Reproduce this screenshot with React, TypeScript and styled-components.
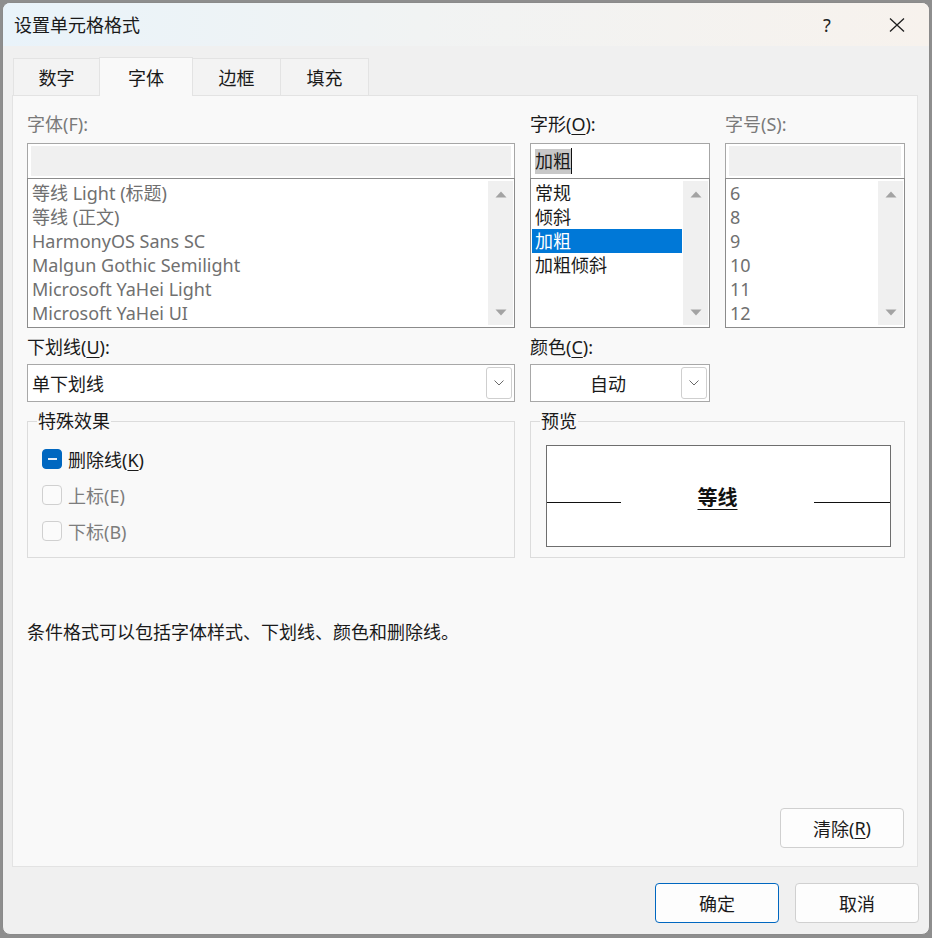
import React from "react";
import styled, { createGlobalStyle } from "styled-components";

const GlobalStyle = createGlobalStyle`
  html, body {
    margin: 0;
    padding: 0;
    background: #8e8e8e;
  }
  body {
    font-family: "Noto Sans", "Noto Sans CJK SC", sans-serif;
    font-size: 18px;
    color: #1a1a1a;
  }
  * {
    box-sizing: border-box;
  }
`;

// Window frame
const Window = styled.div`
  margin: 2px 0 0 2px;
  width: 928px;
  height: 933px;
  border: 1px solid #8a8a8a;
  border-radius: 8px;
  overflow: hidden;
  background: #f0f0f0;
  display: flex;
  flex-direction: column;
`;

const TitleBar = styled.div`
  height: 43px;
  flex: none;
  display: flex;
  align-items: center;
  padding-left: 11px;
  background: linear-gradient(90deg, #e9f3fa 0%, #f1f3f3 45%, #f7f2ed 100%);
`;

const Title = styled.div`
  flex: 1;
  font-size: 18px;
  line-height: 24px;
  color: #1a1a1a;
`;

const TitleButton = styled.div<{ $w: number }>`
  width: ${({ $w }) => $w}px;
  height: 43px;
  display: flex;
  align-items: center;
  justify-content: center;
  font-size: 18px;
  color: #222;
`;

const Body = styled.div`
  flex: 1;
  display: flex;
  flex-direction: column;
  padding: 11px 11px 0 9px;
  min-height: 0;
`;

const TabRow = styled.div`
  display: flex;
  align-items: flex-end;
  height: 38px;
  padding-left: 2px;
`;

const Tab = styled.div<{ $w: number; $active?: boolean }>`
  width: ${({ $w }) => $w}px;
  height: ${({ $active }) => ($active ? 39 : 37)}px;
  margin-bottom: ${({ $active }) => ($active ? -1 : 0)}px;
  position: relative;
  z-index: ${({ $active }) => ($active ? 1 : 0)};
  display: flex;
  align-items: center;
  justify-content: center;
  font-size: 18px;
  color: #1a1a1a;
  background: ${({ $active }) => ($active ? "#f9f9f9" : "#f3f3f3")};
  border: 1px solid #e3e3e3;
  border-bottom: 0;
  margin-left: -1px;
`;

const Panel = styled.div`
  flex: 1;
  display: flex;
  flex-direction: column;
  background: #f9f9f9;
  border: 1px solid #e3e3e3;
  padding: 15px 12px 18px 14px;
`;

const Grid = styled.div`
  display: grid;
  grid-template-columns: 488px 180px 180px;
  column-gap: 15px;
`;

const Field = styled.div<{ $top?: number }>`
  display: flex;
  flex-direction: column;
  margin-top: ${({ $top }) => $top || 0}px;
`;

const Label = styled.div<{ $disabled?: boolean; $gap?: number }>`
  height: 26px;
  line-height: 26px;
  margin-bottom: ${({ $gap }) => $gap ?? 6}px;
  color: ${({ $disabled }) => ($disabled ? "#7a7a7a" : "#1a1a1a")};
`;

const Acc = styled.span`
  text-decoration: underline;
  text-underline-offset: 3px;
  text-decoration-thickness: 1px;
`;

// Text box above each list
const TextBox = styled.div<{ $disabled?: boolean }>`
  height: 36px;
  border: 1px solid #a6a6a6;
  background: #fff;
  padding: ${({ $disabled }) => ($disabled ? "2px 3px" : "4px 4px")};
  display: flex;
  align-items: center;
`;

const DisabledFill = styled.div`
  flex: 1;
  align-self: stretch;
  background: #f0f0f0;
`;

const SelectedText = styled.span`
  background: #c8c8c8;
  line-height: 25px;
  color: #1a1a1a;
`;

const Caret = styled.span`
  display: inline-block;
  width: 1px;
  height: 26px;
  background: #111;
`;

const List = styled.div`
  height: 150px;
  margin-top: -1px;
  border: 1px solid #8b8b8b;
  background: #fff;
  display: flex;
`;

const Items = styled.div`
  flex: 1;
  padding: 2px 1px 0 1px;
  overflow: hidden;
`;

const Item = styled.div<{ $selected?: boolean; $disabled?: boolean }>`
  height: 24px;
  line-height: 24px;
  padding-left: 3px;
  white-space: nowrap;
  color: ${({ $selected, $disabled }) =>
    $selected ? "#fff" : $disabled ? "#707070" : "#1a1a1a"};
  background: ${({ $selected }) => ($selected ? "#0078d7" : "transparent")};
`;

const ScrollTrack = styled.div`
  width: 25px;
  margin: 2px 1px 2px 0;
  background: #f0f0f0;
  display: flex;
  flex-direction: column;
  justify-content: space-between;
  align-items: center;
  padding: 10px 0 9px;
`;

const Combo = styled.div`
  height: 38px;
  border: 1px solid #a8a8a8;
  background: #fff;
  display: flex;
  align-items: center;
  padding: 2px 2px 2px 4px;
`;

const ComboText = styled.div<{ $center?: boolean }>`
  flex: 1;
  text-align: ${({ $center }) => ($center ? "center" : "left")};
`;

const DropButton = styled.div`
  width: 26px;
  align-self: stretch;
  border: 1px solid #cfcfcf;
  border-radius: 3px;
  background: #fff;
  display: flex;
  align-items: center;
  justify-content: center;
`;

const Group = styled.fieldset<{ $span?: number }>`
  grid-column: span ${({ $span }) => $span || 1};
  margin: 7px 0 0 0;
  padding: 0;
  border: 1px solid #dcdcdc;
  min-width: 0;
`;

const Legend = styled.legend`
  margin-left: 9px;
  padding: 0 1px;
  line-height: 24px;
  color: #1a1a1a;
`;

const CheckList = styled.div`
  padding: 8px 0 6px 14px;
  display: flex;
  flex-direction: column;
`;

const CheckRow = styled.div<{ $disabled?: boolean }>`
  height: 36px;
  display: flex;
  align-items: center;
  gap: 6px;
  color: ${({ $disabled }) => ($disabled ? "#7d7d7d" : "#1a1a1a")};
`;

const Box = styled.div<{ $mixed?: boolean }>`
  width: 20px;
  height: 20px;
  border-radius: 4px;
  border: 1px solid ${({ $mixed }) => ($mixed ? "#0067c0" : "#d0d0d0")};
  background: ${({ $mixed }) => ($mixed ? "#0067c0" : "#fbfbfb")};
  display: flex;
  align-items: center;
  justify-content: center;
`;

const Dash = styled.div`
  width: 9px;
  height: 2px;
  background: #e6eef8;
`;

const PreviewBox = styled.div`
  margin: 12px 13px 10px 15px;
  height: 102px;
  border: 1px solid #6e6e6e;
  background: #fff;
  display: flex;
  align-items: center;
`;

const PreviewLine = styled.div<{ $w: number }>`
  width: ${({ $w }) => $w}px;
  height: 1px;
  margin-top: 13px;
  background: #111;
`;

const PreviewText = styled.div`
  flex: 1;
  text-align: center;
  font-size: 20px;
  font-weight: 700;
  text-decoration: underline;
  text-underline-offset: 4px;
  text-decoration-thickness: 1px;
  color: #111;
`;

const Note = styled.div`
  margin-top: 62px;
  line-height: 24px;
  color: #1a1a1a;
`;

const Spacer = styled.div`
  flex: 1;
`;

const ButtonRow = styled.div<{ $pad?: string }>`
  display: flex;
  justify-content: flex-end;
  gap: 16px;
  padding: ${({ $pad }) => $pad || "0"};
`;

const Button = styled.div<{ $primary?: boolean }>`
  width: 124px;
  height: 40px;
  border-radius: 4px;
  border: 1px solid ${({ $primary }) => ($primary ? "#0067c0" : "#d0d0d0")};
  background: #fdfdfd;
  display: flex;
  align-items: center;
  justify-content: center;
  color: #1a1a1a;
`;

const ArrowUp = () => (
  <svg width="12" height="7" viewBox="0 0 12 7">
    <path d="M6 0.5 L11.5 6.5 L0.5 6.5 Z" fill="#a3a3a3" />
  </svg>
);

const ArrowDown = () => (
  <svg width="12" height="7" viewBox="0 0 12 7">
    <path d="M0.5 0.5 L11.5 0.5 L6 6.5 Z" fill="#a3a3a3" />
  </svg>
);

const Chevron = () => (
  <svg width="10" height="6" viewBox="0 0 10 6">
    <path d="M0.5 0.5 L5 5 L9.5 0.5" fill="none" stroke="#6a6a6a" strokeWidth="1" />
  </svg>
);

const CloseIcon = () => (
  <svg width="16" height="14" viewBox="0 0 16 14">
    <path d="M1 0.5 L15 13.5 M15 0.5 L1 13.5" stroke="#1f1f1f" strokeWidth="1.3" />
  </svg>
);

type PickerProps = {
  items: string[];
  disabled?: boolean;
  selected?: number;
  value?: string;
};

const Picker: React.FC<PickerProps> = ({ items, disabled, selected, value }) => (
  <>
    <TextBox $disabled={disabled}>
      {disabled ? (
        <DisabledFill />
      ) : (
        <>
          <SelectedText>{value}</SelectedText>
          <Caret />
        </>
      )}
    </TextBox>
    <List>
      <Items>
        {items.map((it, i) => (
          <Item key={it} $disabled={disabled} $selected={i === selected}>
            {it}
          </Item>
        ))}
      </Items>
      <ScrollTrack>
        <ArrowUp />
        <ArrowDown />
      </ScrollTrack>
    </List>
  </>
);

const fonts = [
  "等线 Light (标题)",
  "等线 (正文)",
  "HarmonyOS Sans SC",
  "Malgun Gothic Semilight",
  "Microsoft YaHei Light",
  "Microsoft YaHei UI",
];
const styles = ["常规", "倾斜", "加粗", "加粗倾斜"];
const sizes = ["6", "8", "9", "10", "11", "12"];

const tabs = [
  { label: "数字", w: 87 },
  { label: "字体", w: 94, active: true },
  { label: "边框", w: 89 },
  { label: "填充", w: 89 },
];

export default function App() {
  return (
    <>
      <GlobalStyle />
      <Window>
        <TitleBar>
          <Title>设置单元格格式</Title>
          <TitleButton $w={76}>?</TitleButton>
          <TitleButton $w={64}>
            <CloseIcon />
          </TitleButton>
        </TitleBar>
        <Body>
          <TabRow>
            {tabs.map((t) => (
              <Tab key={t.label} $w={t.w} $active={t.active}>
                {t.label}
              </Tab>
            ))}
          </TabRow>
          <Panel>
            <Grid>
              <Field>
                <Label $disabled>字体(F):</Label>
                <Picker items={fonts} disabled />
              </Field>
              <Field>
                <Label>
                  字形(<Acc>O</Acc>):
                </Label>
                <Picker items={styles} selected={2} value="加粗" />
              </Field>
              <Field>
                <Label $disabled>字号(S):</Label>
                <Picker items={sizes} disabled />
              </Field>

              <Field $top={6}>
                <Label $gap={4}>
                  下划线(<Acc>U</Acc>):
                </Label>
                <Combo>
                  <ComboText>单下划线</ComboText>
                  <DropButton>
                    <Chevron />
                  </DropButton>
                </Combo>
              </Field>
              <Field $top={6}>
                <Label $gap={4}>
                  颜色(<Acc>C</Acc>):
                </Label>
                <Combo>
                  <ComboText $center>自动</ComboText>
                  <DropButton>
                    <Chevron />
                  </DropButton>
                </Combo>
              </Field>
              <div />

              <Group>
                <Legend>特殊效果</Legend>
                <CheckList>
                  <CheckRow>
                    <Box $mixed>
                      <Dash />
                    </Box>
                    <span>
                      删除线(<Acc>K</Acc>)
                    </span>
                  </CheckRow>
                  <CheckRow $disabled>
                    <Box />
                    <span>上标(E)</span>
                  </CheckRow>
                  <CheckRow $disabled>
                    <Box />
                    <span>下标(B)</span>
                  </CheckRow>
                </CheckList>
              </Group>
              <Group $span={2}>
                <Legend>预览</Legend>
                <PreviewBox>
                  <PreviewLine $w={74} />
                  <PreviewText>等线</PreviewText>
                  <PreviewLine $w={76} />
                </PreviewBox>
              </Group>
            </Grid>

            <Note>条件格式可以包括字体样式、下划线、颜色和删除线。</Note>
            <Spacer />
            <ButtonRow $pad="0 1px 0 0">
              <Button>
                清除(<Acc>R</Acc>)
              </Button>
            </ButtonRow>
          </Panel>
        </Body>
        <ButtonRow $pad="16px 10px 11px 0">
          <Button $primary>确定</Button>
          <Button>取消</Button>
        </ButtonRow>
      </Window>
    </>
  );
}
